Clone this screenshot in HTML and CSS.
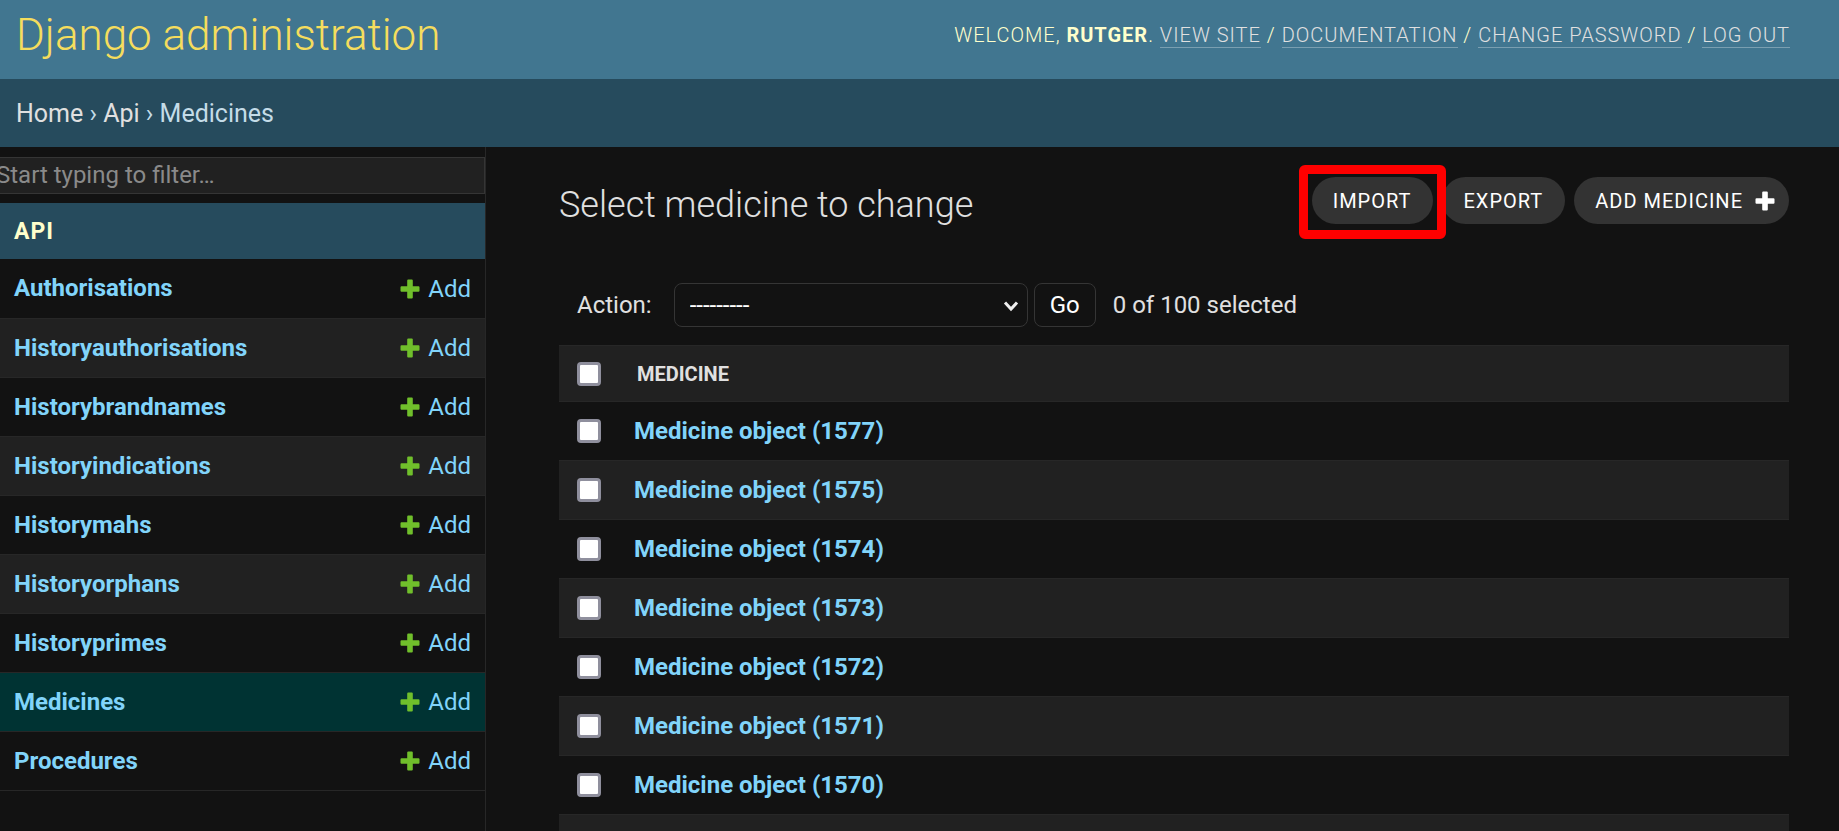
FILE: index.html
```html
<!DOCTYPE html>
<html lang="en">
<head>
<meta charset="utf-8">
<meta name="viewport" content="width=device-width, initial-scale=1">
<title>Select medicine to change | Django administration</title>
<link rel="stylesheet" href="styles.css">
</head>
<body>
<svg class="sprite" aria-hidden="true">
  <symbol id="plus" viewBox="0 0 20 20">
    <path d="M8.2 .5h3.6a1 1 0 0 1 1 1v5.700h5.700a1 1 0 0 1 1 1v3.600a1 1 0 0 1-1 1h-5.700v5.700a1 1 0 0 1-1 1H8.200a1 1 0 0 1-1-1v-5.700H1.500a1 1 0 0 1-1-1V8.200a1 1 0 0 1 1-1h5.700V1.500a1 1 0 0 1 1-1z"/>
  </symbol>
</svg>
<header class="header">
  <a class="site-name" href="#">Django administration</a>
  <div class="user-tools">Welcome, <strong>Rutger</strong>. <a href="#">View site</a> / <a href="#">Documentation</a> / <a href="#">Change password</a> / <a href="#">Log out</a></div>
</header>
<nav class="breadcrumbs" aria-label="Breadcrumbs"><a href="#">Home</a> › <a href="#">Api</a> › Medicines</nav>
<div class="layout">
  <nav class="sidebar" aria-label="Applications">
    <input class="filter" type="search" placeholder="Start typing to filter…" aria-label="Filter navigation items">
    <table class="models">
      <caption><a href="#">API</a></caption>
      <tbody>
      <tr><th scope="row"><a href="#">Authorisations</a></th><td><a class="add" href="#"><svg><use href="#plus"/></svg>Add</a></td></tr>
      <tr><th scope="row"><a href="#">Historyauthorisations</a></th><td><a class="add" href="#"><svg><use href="#plus"/></svg>Add</a></td></tr>
      <tr><th scope="row"><a href="#">Historybrandnames</a></th><td><a class="add" href="#"><svg><use href="#plus"/></svg>Add</a></td></tr>
      <tr><th scope="row"><a href="#">Historyindications</a></th><td><a class="add" href="#"><svg><use href="#plus"/></svg>Add</a></td></tr>
      <tr><th scope="row"><a href="#">Historymahs</a></th><td><a class="add" href="#"><svg><use href="#plus"/></svg>Add</a></td></tr>
      <tr><th scope="row"><a href="#">Historyorphans</a></th><td><a class="add" href="#"><svg><use href="#plus"/></svg>Add</a></td></tr>
      <tr><th scope="row"><a href="#">Historyprimes</a></th><td><a class="add" href="#"><svg><use href="#plus"/></svg>Add</a></td></tr>
      <tr class="current"><th scope="row"><a href="#">Medicines</a></th><td><a class="add" href="#"><svg><use href="#plus"/></svg>Add</a></td></tr>
      <tr><th scope="row"><a href="#">Procedures</a></th><td><a class="add" href="#"><svg><use href="#plus"/></svg>Add</a></td></tr>
      </tbody>
    </table>
  </nav>
  <main class="content">
    <div class="title-row">
      <h1>Select medicine to change</h1>
      <ul class="object-tools">
        <li class="highlighted"><a href="#">Import</a></li>
        <li><a href="#">Export</a></li>
        <li><a href="#">Add medicine<svg><use href="#plus"/></svg></a></li>
      </ul>
    </div>
    <form class="changelist">
      <div class="actions">
        <label for="action">Action:</label>
        <span class="select-wrap">
          <select id="action"><option>---------</option></select>
          <svg class="chevron" viewBox="0 0 16 12" aria-hidden="true"><path d="M2 2.500l6 6.500 6-6.500"/></svg>
        </span>
        <button type="button">Go</button>
        <span class="counter">0 of 100 selected</span>
      </div>
      <table class="results">
        <thead><tr><th class="check"><input type="checkbox" aria-label="Select all"></th><th scope="col"><span>Medicine</span></th></tr></thead>
        <tbody>
        <tr><td class="check"><input type="checkbox" aria-label="Select 1577"></td><th scope="row"><a href="#">Medicine object (1577)</a></th></tr>
        <tr><td class="check"><input type="checkbox" aria-label="Select 1575"></td><th scope="row"><a href="#">Medicine object (1575)</a></th></tr>
        <tr><td class="check"><input type="checkbox" aria-label="Select 1574"></td><th scope="row"><a href="#">Medicine object (1574)</a></th></tr>
        <tr><td class="check"><input type="checkbox" aria-label="Select 1573"></td><th scope="row"><a href="#">Medicine object (1573)</a></th></tr>
        <tr><td class="check"><input type="checkbox" aria-label="Select 1572"></td><th scope="row"><a href="#">Medicine object (1572)</a></th></tr>
        <tr><td class="check"><input type="checkbox" aria-label="Select 1571"></td><th scope="row"><a href="#">Medicine object (1571)</a></th></tr>
        <tr><td class="check"><input type="checkbox" aria-label="Select 1570"></td><th scope="row"><a href="#">Medicine object (1570)</a></th></tr>
        <tr><td class="check"></td><th></th></tr>
        </tbody>
      </table>
    </form>
  </main>
</div>
</body>
</html>
```
FILE: styles.css
```css
* { box-sizing: border-box; }
html, body { height: 100%; }
body {
  margin: 0;
  display: flex;
  flex-direction: column;
  overflow: hidden;
  background: #121212;
  color: #e0e0e0;
  font: 24px/28px Roboto, "Liberation Sans", sans-serif;
}
a { color: #81d4fa; text-decoration: none; }
.sprite { display: none; }

.header {
  display: flex;
  justify-content: space-between;
  align-items: center;
  padding: 8px 49px 17px 16px;
  background: #417690;
  color: #ffc;
}
.site-name { font-size: 44px; line-height: 54px; font-weight: 300; color: #f5dd5d; }
.user-tools { font-size: 20px; line-height: 24px; font-weight: 300; letter-spacing: 1px; text-transform: uppercase; }
.user-tools strong { font-weight: 700; }
.user-tools a { color: #e0e0e0; border-bottom: 1px solid rgba(255, 255, 255, .3); }

.breadcrumbs { padding: 20px 16px 18px; font-size: 25px; line-height: 30px; background: #264b5d; color: #c4dce8; }
.breadcrumbs a { color: #e0e0e0; }

.layout { flex: 1; min-height: 0; display: flex; overflow: hidden; }
.sidebar { flex: 0 0 486px; border-right: 1px solid #272727; padding-top: 10px; }
.filter {
  display: block;
  width: 100%;
  height: 37px;
  margin: 0 0 9px;
  padding: 0 0 2px;
  text-indent: -4px;
  appearance: none;
  border: 1px solid #353535;
  border-left: 0;
  background: #212121;
  color: #eee;
  font: inherit;
}
.filter::placeholder { color: #8a8a8a; opacity: 1; }

table { width: 100%; border-collapse: collapse; }
.models caption { padding: 15px 14px 13px; background: #264b5d; text-align: left; font-size: 23px; font-weight: 700; letter-spacing: 1px; }
.models caption a { color: #ffc; }
.models th, .models td { height: 59px; padding: 0 14px; border-bottom: 1px solid #272727; font-weight: 400; }
.models th { text-align: left; font-weight: 700; }
.models td { text-align: right; }
.models tr:nth-child(even) { background: #212121; }
.models tr.current { background: #033; }
.add { display: inline-flex; align-items: center; gap: 8px; vertical-align: middle; }
.add svg { width: 20px; height: 20px; fill: #70bf2b; }

.content { flex: 1; min-width: 0; padding: 30px 50px 0 73px; }
.title-row { display: flex; justify-content: space-between; align-items: flex-start; margin-bottom: 57px; }
h1 { margin: 7px 0 0; font-size: 36px; line-height: 42px; font-weight: 300; }
.object-tools { display: flex; gap: 9px; margin: 0; padding: 0; list-style: none; }
.object-tools a {
  display: flex;
  align-items: center;
  gap: 12px;
  height: 47px;
  padding: 0 22px 0 21px;
  border-radius: 24px;
  background: #333;
  color: #fff;
  font-size: 20px;
  letter-spacing: 1px;
  text-transform: uppercase;
}
.object-tools svg { width: 20px; height: 20px; margin-right: -8px; fill: #fff; }
.highlighted { position: relative; z-index: 1; }
.highlighted::after { content: ""; position: absolute; inset: -12px -13px -15px; border: 9px solid #f00; border-radius: 6px; }

.actions { display: flex; align-items: center; padding: 0 18px; margin-bottom: 18px; }
.actions label { margin-right: 22px; }
.select-wrap { position: relative; flex: 0 0 354px; }
.actions select, .actions button {
  height: 44px;
  border: 1px solid #353535;
  border-radius: 8px;
  background: #121212;
  color: #fff;
  font: inherit;
}
.actions select { display: block; width: 100%; appearance: none; padding: 0 15px; }
.chevron { position: absolute; right: 9px; top: 17px; width: 16px; height: 12px; fill: none; stroke: #eee; stroke-width: 3; pointer-events: none; }
.actions button { margin: 0 17px 0 6px; padding: 0 15px; }

.results th, .results td { height: 59px; padding: 0 15px; border-bottom: 1px solid #272727; text-align: left; font-weight: 700; }
.results thead th { height: 56px; padding-left: 18px; border-top: 1px solid #272727; font-size: 20px; text-transform: uppercase; }
.results .check { width: 60px; padding: 0 0 0 18px; }
.results thead, .results tbody tr:nth-child(even) { background: #212121; }
.results input {
  display: block;
  width: 24px;
  height: 24px;
  margin: 0;
  appearance: none;
  border: 3px solid #8f8f9d;
  border-radius: 4px;
  background: #fff;
}
```
